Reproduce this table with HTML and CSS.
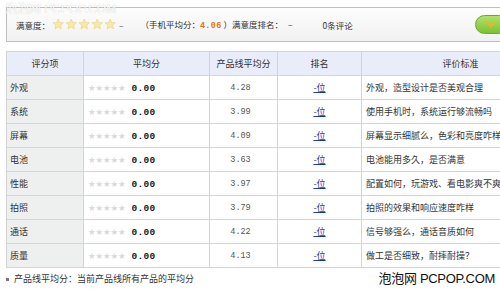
FILE: index.html
```html
<!DOCTYPE html>
<html lang="zh-CN">
<head>
<meta charset="utf-8">
<title>满意度</title>
<link rel="stylesheet" href="styles.css">
</head>
<body>
<div class="page">
  <div class="watermark-top">泡泡网 PCPOP.COM</div>
  <div class="summary">
    <span class="label">满意度：</span>
    <span class="stars-big">
      <svg viewBox="0 0 24 24"><path d="M12 2l2.9 6.6 7.1.6-5.4 4.7 1.6 7-6.2-3.7-6.2 3.7 1.6-7L2 9.2l7.1-.6z"/></svg>
      <svg viewBox="0 0 24 24"><path d="M12 2l2.9 6.6 7.1.6-5.4 4.7 1.6 7-6.2-3.7-6.2 3.7 1.6-7L2 9.2l7.1-.6z"/></svg>
      <svg viewBox="0 0 24 24"><path d="M12 2l2.9 6.6 7.1.6-5.4 4.7 1.6 7-6.2-3.7-6.2 3.7 1.6-7L2 9.2l7.1-.6z"/></svg>
      <svg viewBox="0 0 24 24"><path d="M12 2l2.9 6.6 7.1.6-5.4 4.7 1.6 7-6.2-3.7-6.2 3.7 1.6-7L2 9.2l7.1-.6z"/></svg>
      <svg viewBox="0 0 24 24"><path d="M12 2l2.9 6.6 7.1.6-5.4 4.7 1.6 7-6.2-3.7-6.2 3.7 1.6-7L2 9.2l7.1-.6z"/></svg>
    </span>
    <span class="dash">–</span>
    <span class="avg">（手机平均分：<b class="score">4.06</b> ）满意度排名：<span class="dash2">–</span></span>
    <span class="comments">0条评论</span>
    <span class="go-btn"><svg viewBox="0 0 12 10"><path d="M1.5 2.5l4.5 4.5 4.5-4.5" /></svg></span>
  </div>

  <table class="rating">
    <colgroup>
      <col class="c1"><col class="c2"><col class="c3"><col class="c4"><col class="c5">
    </colgroup>
    <thead>
      <tr><th>评分项</th><th>平均分</th><th>产品线平均分</th><th>排名</th><th>评价标准</th></tr>
    </thead>
    <tbody>
      <tr><td class="item">外观</td><td class="avgc"><span class="stars-sm">★★★★★</span><b class="num">0.00</b></td><td class="line">4.28</td><td class="rank"><a href="#">-位</a></td><td class="std">外观，造型设计是否美观合理</td></tr>
      <tr><td class="item">系统</td><td class="avgc"><span class="stars-sm">★★★★★</span><b class="num">0.00</b></td><td class="line">3.99</td><td class="rank"><a href="#">-位</a></td><td class="std">使用手机时，系统运行够流畅吗</td></tr>
      <tr><td class="item">屏幕</td><td class="avgc"><span class="stars-sm">★★★★★</span><b class="num">0.00</b></td><td class="line">4.09</td><td class="rank"><a href="#">-位</a></td><td class="std">屏幕显示细腻么，色彩和亮度咋样</td></tr>
      <tr><td class="item">电池</td><td class="avgc"><span class="stars-sm">★★★★★</span><b class="num">0.00</b></td><td class="line">3.63</td><td class="rank"><a href="#">-位</a></td><td class="std">电池能用多久，是否满意</td></tr>
      <tr><td class="item">性能</td><td class="avgc"><span class="stars-sm">★★★★★</span><b class="num">0.00</b></td><td class="line">3.97</td><td class="rank"><a href="#">-位</a></td><td class="std">配置如何，玩游戏、看电影爽不爽</td></tr>
      <tr><td class="item">拍照</td><td class="avgc"><span class="stars-sm">★★★★★</span><b class="num">0.00</b></td><td class="line">3.79</td><td class="rank"><a href="#">-位</a></td><td class="std">拍照的效果和响应速度咋样</td></tr>
      <tr><td class="item">通话</td><td class="avgc"><span class="stars-sm">★★★★★</span><b class="num">0.00</b></td><td class="line">4.22</td><td class="rank"><a href="#">-位</a></td><td class="std">信号够强么，通话音质如何</td></tr>
      <tr><td class="item">质量</td><td class="avgc"><span class="stars-sm">★★★★★</span><b class="num">0.00</b></td><td class="line">4.13</td><td class="rank"><a href="#">-位</a></td><td class="std">做工是否细致，耐摔耐操？</td></tr>
    </tbody>
  </table>

  <div class="footer">
    <span class="note"><span class="bullet"></span>产品线平均分：当前产品线所有产品的平均分</span>
    <span class="brand">泡泡网 PCPOP.COM</span>
  </div>
</div>
</body>
</html>
```

FILE: styles.css
```css
html, body {
  margin: 0;
  padding: 0;
  background: #fff;
  overflow: hidden;
}
body {
  width: 500px;
  height: 289px;
  font-family: "Noto Sans CJK SC", "Liberation Sans", sans-serif;
  font-size: 9px;
  color: #333;
}
.page {
  position: relative;
  padding: 7px 0 0 6px;
  width: 600px;
}
.watermark-top {
  position: absolute;
  left: 5px;
  top: 2px;
  font-family: "Liberation Sans", "Noto Sans CJK SC", sans-serif;
  font-size: 12px;
  line-height: 14px;
  color: #fff;
  text-shadow: 0 0 1px rgba(0, 0, 0, 0.25);
  white-space: nowrap;
  z-index: 2;
}
.summary {
  box-sizing: border-box;
  width: 560px;
  height: 35px;
  border: 1px solid #bdbdbd;
  background: linear-gradient(#fdfdfd, #f1f1f1);
  display: flex;
  align-items: center;
  padding-left: 9px;
  white-space: nowrap;
  font-size: 8.5px;
}
.label { margin-right: 2px; }
.stars-big {
  display: flex;
  gap: 0.6px;
}
.stars-big svg {
  width: 12.5px;
  height: 12.5px;
  fill: #f8e9a4;
  stroke: #e6cc70;
  stroke-width: 1;
}
.dash { margin-left: 2px; color: #555; }
.avg { margin-left: 17px; }
.score {
  color: #e07a10;
  font-family: "Liberation Mono", monospace;
  font-weight: bold;
  font-size: 8.5px;
  letter-spacing: 0.3px;
}
.dash2 { margin-left: 5px; }
.comments { margin-left: 30px; }
.go-btn {
  margin-left: 122px;
  width: 34px;
  height: 19px;
  border-radius: 10px;
  background: linear-gradient(#b2e06a, #7cc235);
  border: 1px solid #6aa82a;
  box-sizing: border-box;
  display: flex;
  align-items: center;
  padding-left: 9px;
  flex: none;
}
.go-btn svg {
  width: 11px;
  height: 9px;
  fill: none;
  stroke: #f6b21a;
  stroke-width: 2.4;
}

.rating {
  margin-top: 9px;
  border-collapse: collapse;
  table-layout: fixed;
  width: 553px;
}
.c1 { width: 77px; }
.c2 { width: 126px; }
.c3 { width: 68px; }
.c4 { width: 84px; }
.c5 { width: 198px; }
.rating th, .rating td {
  border: 1px solid #d4d4d4;
  padding: 0;
  height: 23px;
  white-space: nowrap;
  overflow: hidden;
}
.rating th {
  background: #e9ecf9;
  font-weight: normal;
  text-align: center;
  color: #333;
}
.rating td.item {
  background: #eef0f0;
  padding-left: 3px;
}
.avgc {
  padding-left: 4px !important;
}
.stars-sm {
  font-family: "DejaVu Sans", sans-serif;
  font-size: 8.5px;
  color: #d9d9d9;
  letter-spacing: -0.1px;
}
.num {
  margin-left: 6px;
  font-family: "Liberation Mono", monospace;
  font-size: 9.5px;
  font-weight: bold;
  color: #1a1a1a;
  letter-spacing: 0.3px;
}
.line {
  text-align: center;
  font-family: "Liberation Mono", monospace;
  font-size: 8.5px;
  color: #555;
  padding-right: 6px !important;
}
.rank { text-align: center; }
.rank a {
  color: #1f3a9a;
  text-decoration: underline;
}
.std { padding-left: 4px !important; }

.footer {
  display: flex;
  align-items: center;
  justify-content: space-between;
  width: 489px;
  margin-top: 3px;
  height: 16px;
}
.note {
  display: flex;
  align-items: center;
  color: #333;
  line-height: 12px;
}
.bullet {
  width: 3px;
  height: 3px;
  background: #777;
  margin-right: 5px;
}
.brand {
  font-family: "Liberation Sans", "Noto Sans CJK SC", sans-serif;
  font-size: 13px;
  line-height: 16px;
  color: #111;
  letter-spacing: -0.3px;
}
```
